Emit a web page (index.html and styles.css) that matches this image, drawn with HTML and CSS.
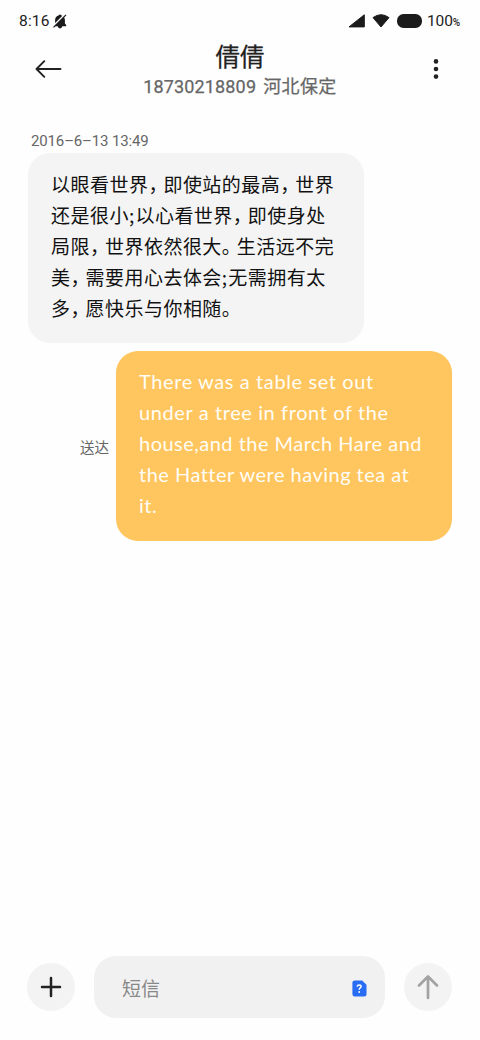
FILE: index.html
```html
<!DOCTYPE html>
<html lang="zh-CN">
<head>
<meta charset="utf-8">
<title>短信</title>
<link rel="stylesheet" href="styles.css">
</head>
<body>
<div class="screen">
  <div class="status">
    <span class="clock">8:16</span>
    <svg class="bell" width="14" height="15" viewBox="0 0 14 15"><path d="M2.1 10.6V6.1C2.1 3.2 3.7 1.8 5.5 1.4Q7-.3 8.5 1.4C10.5 1.8 11.9 3.4 11.9 6.1V9.6L13.2 11V12.3H.8V11.4zM4.5 12H9.5Q8.9 14.4 7 14.4T4.5 12z" fill="#1b1b1b"/><path d="M-.2 12.6 11.4.9" stroke="#fff" stroke-width="1.5"/><path d="M.5 13.4 13 .9" stroke="#1b1b1b" stroke-width="1.2"/></svg>
    <span class="grow"></span>
    <svg class="signal" width="17" height="14" viewBox="0 0 17 14"><path d="M1 12.9 16.3.8V12.9z" fill="#1b1b1b" stroke="#1b1b1b" stroke-linejoin="round"/></svg>
    <svg class="wifi" width="18" height="14" viewBox="0 0 18 14"><path d="M1 3.6Q9-2.2 17 3.6L9 13z" fill="#1b1b1b" stroke="#1b1b1b" stroke-linejoin="round"/></svg>
    <span class="battery"></span>
    <span class="level">100<small>%</small></span>
  </div>
  <header class="header">
    <svg class="back" width="27" height="18" viewBox="0 0 27 18"><path d="M25.5 9H1.8M9.3 1.2 1.5 9l7.8 7.8" fill="none" stroke="#222" stroke-width="1.9" stroke-linecap="round" stroke-linejoin="round"/></svg>
    <div class="contact">
      <h1 class="name">倩倩</h1>
      <div class="phone"><span class="number">18730218809</span> <span class="place">河北保定</span></div>
    </div>
    <svg class="more" width="6" height="20" viewBox="0 0 6 20"><g fill="#222"><circle cx="3" cy="2.4" r="2.3"/><circle cx="3" cy="10" r="2.3"/><circle cx="3" cy="17.6" r="2.3"/></g></svg>
  </header>
  <main class="thread">
    <time class="date">2016<i>–</i>6<i>–</i>13 13:49</time>
    <div class="bubble received">
      <div>以眼看世界<b>，</b>即使站的最高<b>，</b>世界</div>
      <div>还是很小<em>;</em>以心看世界<b>，</b>即使身处</div>
      <div>局限<b>，</b>世界依然很大<b>。</b>生活远不完</div>
      <div>美<b>，</b>需要用心去体会<em>;</em>无需拥有太</div>
      <div>多<b>，</b>愿快乐与你相随<b>。</b></div>
    </div>
    <div class="outgoing">
      <span class="delivered">送达</span>
      <div class="bubble sent">
        <div class="wide">There was a table set out</div>
        <div class="wide">under a tree in front of the</div>
        <div>house,and the March Hare and</div>
        <div>the Hatter were having tea at</div>
        <div>it.</div>
      </div>
    </div>
  </main>
  <footer class="composer">
    <span class="round"><svg width="22" height="22" viewBox="0 0 22 22"><path d="M11 2v18M2 11h18" stroke="#222" stroke-width="2.5" stroke-linecap="round"/></svg></span>
    <div class="field">
      <span class="placeholder">短信</span>
      <svg class="sim" width="15" height="17" viewBox="0 0 15 17"><path d="M2.8.4H10.2L14.5 4.8V14Q14.5 16.5 12 16.5H2.8Q.4 16.5.4 14V2.8Q.4.4 2.8.4z" fill="#296df4"/><path d="M5.2 6.6Q5.3 4.9 7.2 4.9T9.1 6.5C9.1 7.8 7.2 7.9 7.2 9.8" fill="none" stroke="#fff" stroke-width="1.5"/><circle cx="7.2" cy="12" r=".95" fill="#fff"/></svg>
    </div>
    <span class="round"><svg width="22" height="26" viewBox="0 0 22 26"><path d="M11 24V2.5M2 11.5l9-9 9 9" fill="none" stroke="#a3a3a3" stroke-width="2.7" stroke-linecap="round" stroke-linejoin="round"/></svg></span>
  </footer>
</div>
</body>
</html>
```
FILE: styles.css
```css
* { box-sizing: border-box; }
body { margin: 0; background: #fff; font-family: Roboto, "Noto Sans CJK SC", sans-serif; }
svg { display: block; flex: none; }
.screen { width: 480px; height: 1040px; display: flex; flex-direction: column; background: #fefefe; }
.status { height: 40px; padding: 2px 21px 0 19px; display: flex; align-items: center; color: #222; }
.clock { font-family: Roboto, sans-serif; font-size: 15.5px; width: 34px; letter-spacing: .2px; }
.grow { flex: 1; }
.signal { margin-right: 7px; }
.wifi { margin-right: 7px; }
.battery { width: 25px; height: 14px; border-radius: 6.5px; background: #1b1b1b; margin-right: 5px; }
.level { font-size: 15.5px; width: 32px; white-space: nowrap; letter-spacing: -.1px; }
.level small { font-size: 10px; font-weight: 500; }
.header { height: 92px; padding: 0 41px 0 35px; display: flex; align-items: flex-start; }
.back { margin-top: 20px; }
.more { margin-top: 19px; }
.contact { flex: 1; text-align: center; padding-right: 15px; }
.name { margin: 0; font-size: 24.5px; line-height: 36px; font-weight: 400; color: #222; -webkit-text-stroke: .3px #222; }
.phone { display: flex; justify-content: center; gap: 7px; font-size: 18px; line-height: 22px; font-weight: 400; color: #666; -webkit-text-stroke: .25px #666; }
.number { letter-spacing: .15px; }
.place { font-size: 18px; letter-spacing: .4px; }
.thread { flex: 1; padding: 0 28px; }
.date { display: block; height: 21px; line-height: 18px; padding-left: 3px; font-size: 15px; letter-spacing: -.15px; color: #666; }
.date i { font-style: normal; }
.bubble { width: 336px; height: 190px; border-radius: 22px; line-height: 31px; padding: 15px 0 0 23px; white-space: nowrap; }
.received { background: #f4f4f4; color: #111; font-family: "Noto Sans CJK SC", sans-serif; font-size: 19px; letter-spacing: .48px; }
.received b, .received em { display: inline-block; font-weight: 400; font-style: normal; width: 15px; letter-spacing: 0; font-feature-settings: "halt"; }
.received em { width: 6.5px; }
.outgoing { margin-top: 8px; display: flex; align-items: center; justify-content: flex-end; gap: 7px; }
.delivered { font-size: 14.5px; color: #666; }
.sent { background: #ffc55e; color: #fffdf5; font-family: Lato, sans-serif; font-size: 20px; letter-spacing: .48px; }
.wide { letter-spacing: .6px; }
.composer { height: 106px; padding: 22px 28px 0 27px; display: flex; align-items: flex-start; gap: 19px; }
.round { width: 48px; height: 48px; margin-top: 7px; border-radius: 50%; background: #f3f3f3; display: flex; align-items: center; justify-content: center; }
.field { flex: 1; height: 62px; border-radius: 22px; background: #f1f1f1; display: flex; align-items: center; justify-content: space-between; padding: 0 18px 0 28px; }
.placeholder { font-size: 19px; color: #888; }
.sim { margin-top: 3px; }
```
